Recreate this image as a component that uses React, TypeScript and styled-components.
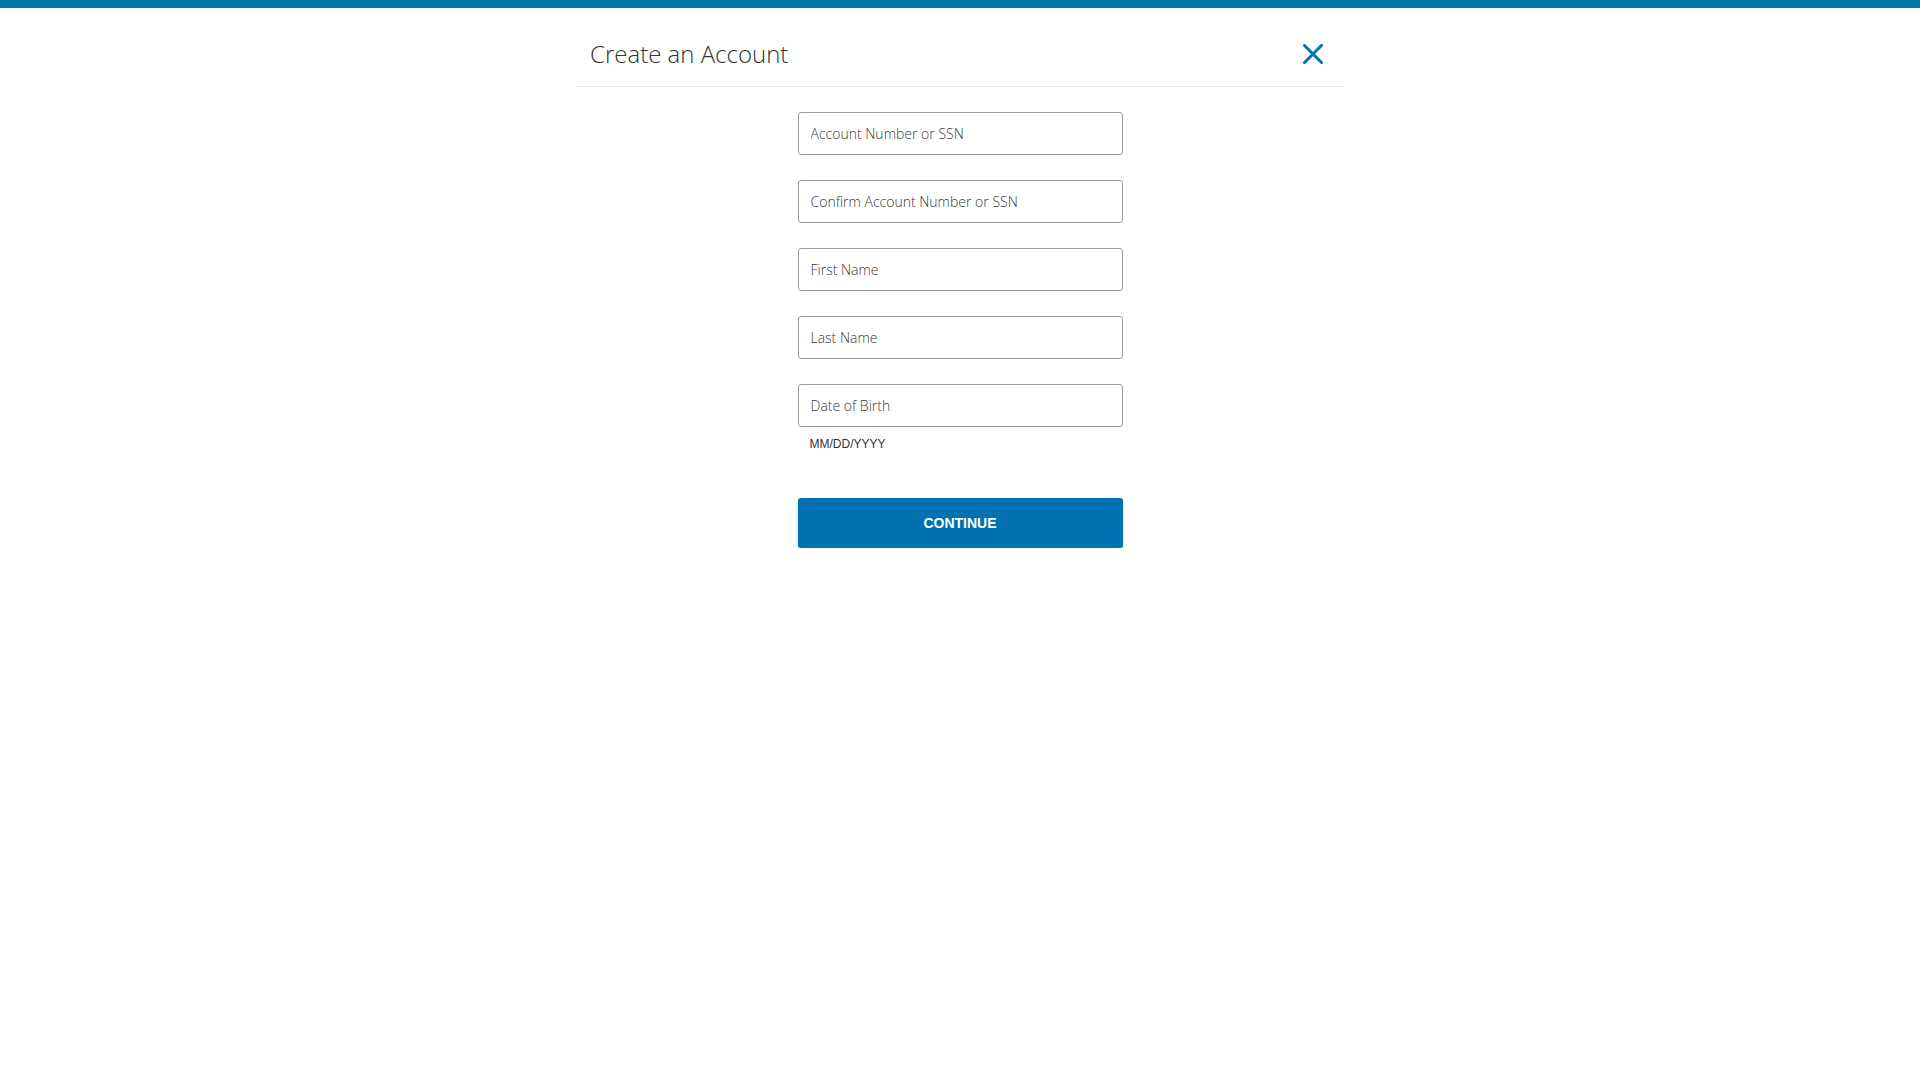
import React from "react";
import styled, { createGlobalStyle } from "styled-components";

const Global = createGlobalStyle`
  html, body { margin: 0; padding: 0; background: #ffffff; }
  body { font-family: "Open Sans", "Liberation Sans", Arial, sans-serif; }
  * { box-sizing: border-box; }
`;

const TopBar = styled.div`
  height: 8px;
  background: #0478a9;
`;

const Modal = styled.div`
  width: 768px;
  margin: 0 auto;
`;

const Header = styled.header`
  display: flex;
  align-items: center;
  justify-content: space-between;
  padding: 30px 21px 16px 14px;
  border-bottom: 1px solid #e6e6e6;
`;

const Title = styled.h1`
  margin: 0;
  font-family: "Open Sans", "Liberation Sans", sans-serif;
  font-weight: 300;
  font-size: 24px;
  line-height: 32px;
  color: #333333;
`;

const CloseButton = styled.button`
  width: 20px;
  height: 20px;
  padding: 0;
  border: 0;
  background: transparent;
  cursor: pointer;
  display: flex;
  align-items: center;
  justify-content: center;
`;

const Form = styled.form`
  width: 325px;
  margin: 25px auto 0;
  display: flex;
  flex-direction: column;
`;

const Field = styled.div<{ $gap?: number }>`
  display: flex;
  flex-direction: column;
  margin-bottom: ${(p) => (p.$gap ?? 25)}px;
`;

const Input = styled.input`
  width: 100%;
  height: 43px;
  padding: 0 12px;
  border: 1px solid #9c9c9c;
  border-radius: 3px;
  font-family: "Open Sans", "Liberation Sans", sans-serif;
  font-weight: 300;
  font-size: 14px;
  color: #333;
  outline: none;
  &::placeholder {
    color: #3a3a3a;
    opacity: 1;
  }
`;

const Hint = styled.span`
  margin-top: 10px;
  padding-left: 12px;
  font-family: "Liberation Sans", Arial, sans-serif;
  font-size: 12px;
  line-height: 15px;
  color: #333;
`;

const ContinueButton = styled.button`
  width: 100%;
  height: 50px;
  margin-top: 46px;
  border: 0;
  border-radius: 3px;
  background: #0072b1;
  color: #fff;
  font-family: "Liberation Sans", Arial, sans-serif;
  font-weight: 700;
  font-size: 14px;
  box-shadow: 0 2px 3px rgba(0, 0, 0, 0.25);
  cursor: pointer;
`;

const fields = [
  "Account Number or SSN",
  "Confirm Account Number or SSN",
  "First Name",
  "Last Name",
];

export default function App() {
  return (
    <>
      <Global />
      <TopBar />
      <Modal>
        <Header>
          <Title>Create an Account</Title>
          <CloseButton aria-label="Close">
            <svg width="20" height="20" viewBox="0 0 20 20">
              <path
                d="M1.5 1.5 L18.5 18.5 M18.5 1.5 L1.5 18.5"
                stroke="#0073b0"
                strokeWidth="3"
                strokeLinecap="square"
                fill="none"
              />
            </svg>
          </CloseButton>
        </Header>
        <Form onSubmit={(e) => e.preventDefault()}>
          {fields.map((f) => (
            <Field key={f}>
              <Input placeholder={f} />
            </Field>
          ))}
          <Field $gap={0}>
            <Input placeholder="Date of Birth" />
            <Hint>MM/DD/YYYY</Hint>
          </Field>
          <ContinueButton type="submit">CONTINUE</ContinueButton>
        </Form>
      </Modal>
    </>
  );
}
